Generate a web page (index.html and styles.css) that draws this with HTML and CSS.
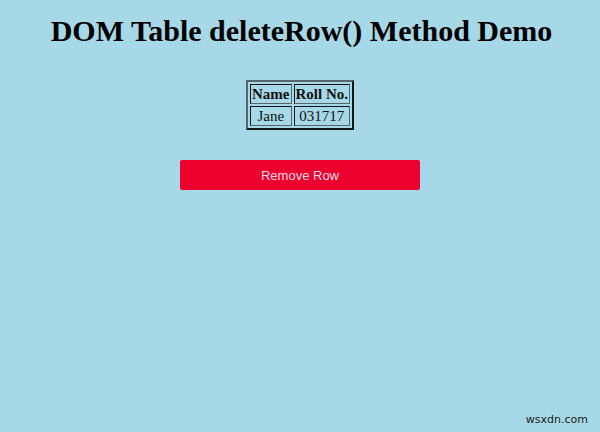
FILE: index.html
```html
<!DOCTYPE html>
<html>
<head>
<meta charset="utf-8">
<link rel="stylesheet" href="styles.css">
</head>
<body>
<h1 class="title">DOM Table deleteRow() Method Demo</h1>
<table class="data" border="1">
<tr><th>Name</th><th>Roll No.</th></tr>
<tr><td>Jane</td><td>031717</td></tr>
</table>
<div class="actions"><button class="btn">Remove Row</button></div>
<div class="mark">wsxdn.com</div>
</body>
</html>
```
FILE: styles.css
```css
html, body { margin: 0; padding: 0; }
body {
  background: #a6d8e7;
  font-family: "Liberation Serif", serif;
  width: 600px;
  height: 432px;
  position: relative;
  overflow: hidden;
}
.title {
  margin: 0;
  padding-top: 13px;
  padding-left: 3px;
  text-align: center;
  font-size: 30px;
  font-weight: bold;
  color: #000;
  line-height: 36px;
}
.data {
  margin: 31px auto 0;
  border-collapse: separate;
  border-spacing: 2px;
  border: 2px outset #56666b;
  font-size: 15px;
  line-height: 16px;
  color: #111;
}
.data th, .data td {
  border: 1px inset #56666b;
  padding: 1px 1px;
  text-align: center;
}
.actions {
  display: flex;
  justify-content: center;
  margin-top: 30px;
}
.btn {
  width: 240px;
  height: 30px;
  background: #ec002e;
  color: #f7dde3;
  border: none;
  border-radius: 2px;
  font-family: "Liberation Sans", sans-serif;
  font-size: 13px;
}
.mark {
  position: absolute;
  right: 12px;
  bottom: 6px;
  font-family: "DejaVu Sans", sans-serif;
  font-size: 11px;
  color: #1a1a1a;
}
```
